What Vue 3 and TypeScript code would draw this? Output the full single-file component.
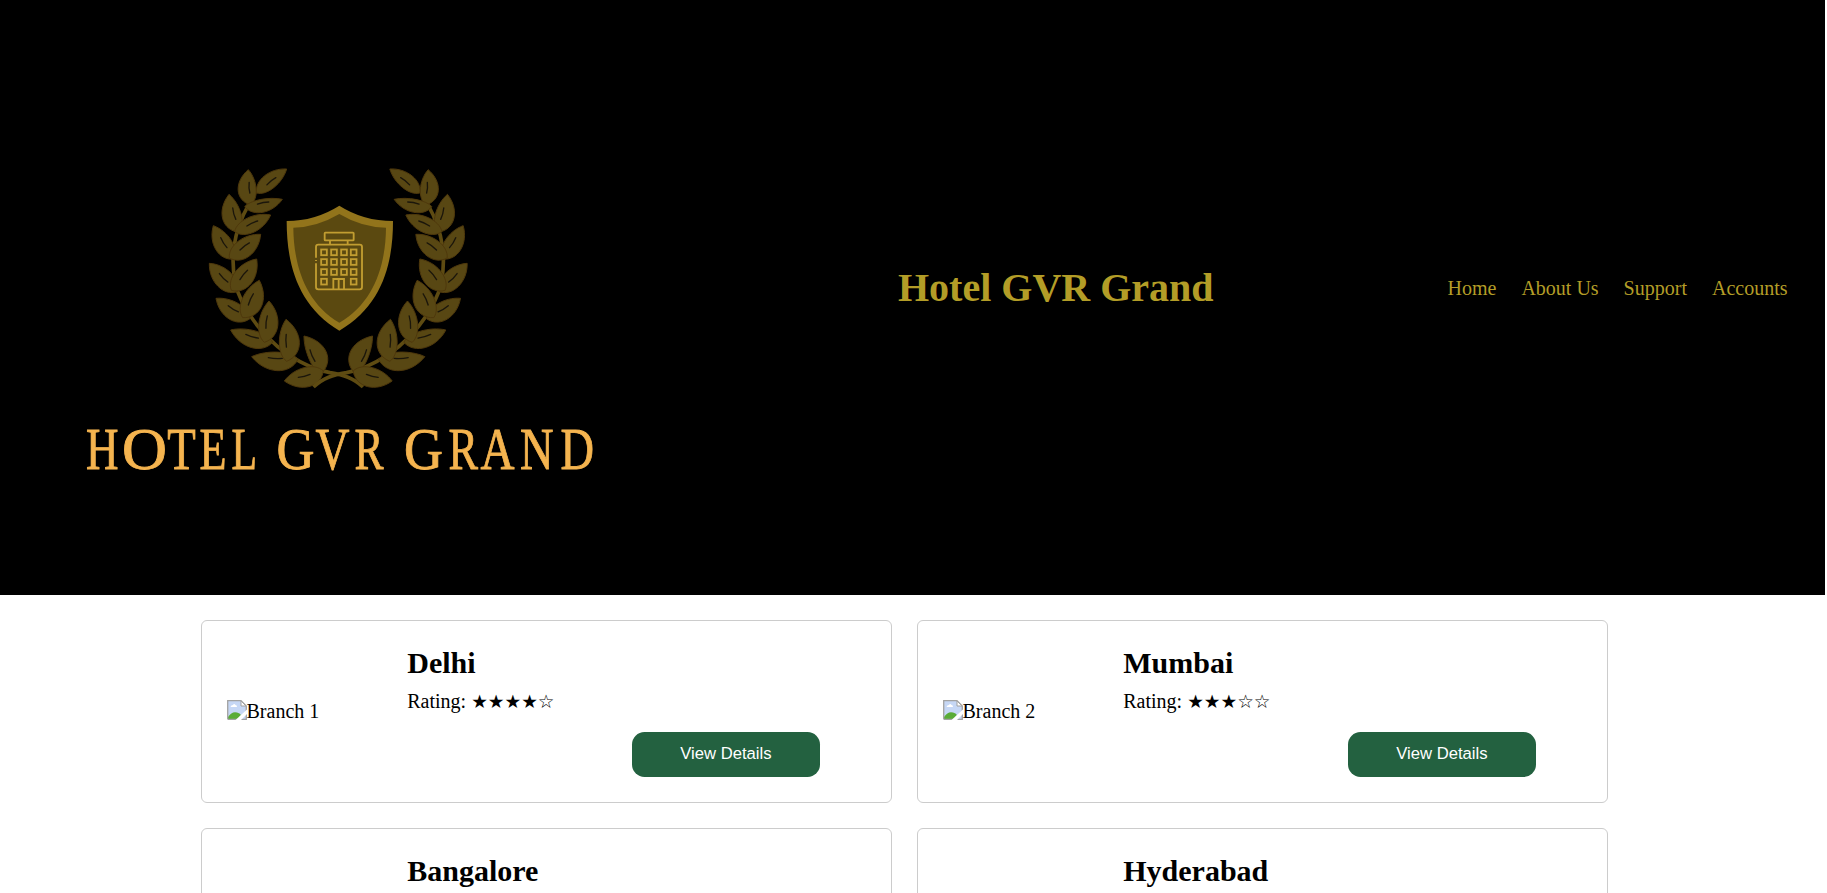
<script setup lang="ts">
interface Branch {
  id: number
  city: string
  rating: number
}

const branches: Branch[] = [
  { id: 1, city: 'Delhi', rating: 4 },
  { id: 2, city: 'Mumbai', rating: 3 },
  { id: 3, city: 'Bangalore', rating: 4 },
  { id: 4, city: 'Hyderabad', rating: 4 },
]

const links: string[] = ['Home', 'About Us', 'Support', 'Accounts']

const stars = (n: number): string => '★'.repeat(n) + '☆'.repeat(5 - n)

// Each wordmark letter: glyph, left edge, width
const wordmark: [string, number, number][] = [
  ['H', 86, 32.5], ['O', 122, 45], ['T', 167.2, 28.5], ['E', 199.5, 27], ['L', 231.5, 25.5],
  ['G', 276.5, 38], ['V', 315.5, 34], ['R', 354.5, 29],
  ['G', 404, 39], ['R', 448.5, 29.5], ['A', 480.5, 34], ['N', 520, 33.5], ['D', 560.5, 33.5],
]

// Wreath leaves: base x/y, tip x/y, bulge to the left, bulge to the right
const leafData: number[][] = [
  [170, 114, 260, 42, 34, 26],
  [152, 150, 145, 44, 46, 26],
  [134, 155, 247, 133, 16, 36],
  [118, 232, 87, 118, 50, 26],
  [104, 230, 212, 180, 28, 34],
  [102, 312, 40, 212, 42, 30],
  [88, 309, 182, 238, 32, 42],
  [112, 410, 28, 325, 40, 34],
  [94, 406, 170, 312, 34, 44],
  [150, 491, 48, 430, 44, 28],
  [128, 488, 178, 376, 32, 50],
  [218, 562, 92, 525, 44, 24],
  [193, 562, 207, 438, 30, 46],
  [294, 613, 155, 605, 50, 24],
  [260, 619, 258, 493, 28, 52],
  [362, 658, 312, 543, 18, 56],
  [370, 648, 253, 678, 46, 32],
]

const leaves = leafData.map(([bx, by, tx, ty, l, r]) => {
  const dx = tx - bx
  const dy = ty - by
  const len = Math.hypot(dx, dy)
  const nx = dy / len
  const ny = -dx / len
  const at = (t: number, off: number): string =>
    `${(bx + dx * t + nx * off).toFixed(1)} ${(by + dy * t + ny * off).toFixed(1)}`
  return {
    shape: `M${bx} ${by}C${at(0.16, l)} ${at(0.68, l)} ${tx} ${ty}C${at(0.68, -r)} ${at(0.16, -r)} ${bx} ${by}Z`,
    vein: `M${at(0.34, 0)}Q${at(0.5, 3)} ${at(0.64, 0)}`,
  }
})

const windows: [number, number][] = []
for (const y of [172, 201, 231, 260]) {
  for (const x of [147, 177, 207, 236]) {
    if (y !== 260 || x === 147 || x === 236) windows.push([x, y])
  }
}
</script>

<template>
  <div class="page">
    <header class="header">
      <svg class="logo" width="680" height="595" viewBox="0 0 680 595">
        <defs>
          <g id="branch">
            <path class="stem" d="M165 112L130 180C98 250 94 320 105 380C122 465 205 570 300 620C340 641 365 648 390 653C430 660 460 668 489 696" />
            <g v-for="(leaf, i) in leaves" :key="i">
              <path class="leaf" :d="leaf.shape" />
              <path class="vein" :d="leaf.vein" />
            </g>
          </g>
        </defs>
        <g transform="translate(200 155) scale(.33333)">
          <use href="#branch" />
          <use href="#branch" transform="translate(829.5 0) scale(-1 1)" />
        </g>
        <g transform="translate(275 195) scale(.33333)">
          <path class="shield" d="M193 32Q265 78 354 78C354 200 325 330 193 407C64 330 35 200 35 78Q120 78 193 32Z" />
          <path class="field" d="M193 57Q260 97 333 98C332 205 300 322 193 383C88 322 56 205 55 98Q125 97 193 57Z" />
          <g class="building">
            <rect x="149" y="113" width="87" height="23" rx="2" />
            <path d="M165 137V149M218 137V149" />
            <path d="M123 188V156Q123 149 130 149H254Q261 149 261 156V276Q261 283 254 283H130Q123 283 123 276V205M123 195V198" />
            <rect v-for="([x, y], i) in windows" :key="i" :x="x - 8.5" :y="y - 8.5" width="17" height="17" />
            <path d="M175 283V252H207V283M191 252V283" />
          </g>
        </g>
        <g class="wordmark">
          <text
            v-for="([ch, x, w], i) in wordmark"
            :key="i"
            :x="x"
            y="469"
            :textLength="w"
            lengthAdjust="spacingAndGlyphs"
          >{{ ch }}</text>
        </g>
      </svg>
      <h1 class="title">Hotel GVR Grand</h1>
      <nav class="nav">
        <a v-for="link in links" :key="link" class="link">{{ link }}</a>
      </nav>
    </header>
    <main class="grid">
      <article v-for="b in branches" :key="b.id" class="card">
        <div class="photo">
          <svg class="broken" width="20" height="20" viewBox="0 0 20 20">
            <path fill="#c6d7f5" d="M1 1H14L19 6V19H1Z" />
            <path fill="#fff" d="M3.5 7Q4 5 6 5Q7 3 8.500 5Q10 5 10 7Z" />
            <path fill="#5aac37" d="M1 19V17Q5 11 10 12.500Q13 13 14 15L11 19Z" />
            <path fill="none" stroke="#a2a2a2" stroke-width="1.300" d="M.7 19.300V.7H14L19.300 6V19.300H.7" />
            <path fill="#fff" stroke="#a2a2a2" d="M14 1V6H19Z" />
            <path fill="#fff" d="M20 9.500V14L14 20H8.500Z" />
          </svg>
          <span class="alt">Branch {{ b.id }}</span>
        </div>
        <div class="info">
          <h2 class="city">{{ b.city }}</h2>
          <p class="rating">Rating: <span class="stars">{{ stars(b.rating) }}</span></p>
          <button class="details">View Details</button>
        </div>
      </article>
    </main>
  </div>
</template>

<style>
body {
  margin: 0;
  overflow: hidden;
  background: #fff;
}
</style>

<style scoped>
.page {
  box-sizing: border-box;
  height: 893px;
  overflow: hidden;
  padding-right: 2px;
  font: 20px/23px "Liberation Serif", "Times New Roman", serif;
  color: #000;
}
.header {
  display: flex;
  align-items: center;
  height: 595px;
  padding: 0 37.5px 20px 0;
  box-sizing: border-box;
  background: #000;
  color: #b39d27;
}
.logo {
  flex: none;
  margin-bottom: -20px;
}
.stem {
  fill: none;
  stroke: #5e4b12;
  stroke-width: 11;
}
.leaf {
  fill: #584713;
  stroke: #4e380c;
  stroke-width: 3;
}
.vein {
  fill: none;
  stroke: #1b160b;
  stroke-width: 4;
  stroke-linecap: round;
}
.shield {
  fill: #92741b;
}
.field {
  fill: #5b4910;
}
.building {
  fill: none;
  stroke: #c19d31;
  stroke-width: 5.500;
}
.wordmark {
  fill: #f5b44f;
  stroke: #f5b44f;
  stroke-width: 0.900;
  font-size: 59.500px;
}
.title {
  margin: 0 0 0 218px;
  font-size: 40px;
  line-height: 46px;
}
.nav {
  display: flex;
  gap: 25px;
  margin-left: auto;
  padding-top: 1px;
}
.grid {
  display: grid;
  grid-template-columns: 691px 691px;
  gap: 25px;
  padding: 25px 0 0 201.250px;
}
.card {
  box-sizing: border-box;
  display: flex;
  align-items: center;
  height: 183px;
  padding: 25px;
  border: 1px solid #ccc;
  border-radius: 6px;
}
.photo {
  display: flex;
  align-items: center;
  width: 155px;
  height: 23px;
  margin-right: 25px;
}
.broken {
  flex: none;
  margin-top: -3px;
}
.alt {
  margin-left: -0.750px;
}
.info {
  flex: 1;
  height: 131px;
}
.city {
  margin: 0;
  font-size: 30px;
  line-height: 34px;
}
.rating {
  height: 23px;
  margin: 10px 0 0;
}
.stars {
  font-family: "DejaVu Sans", sans-serif;
  font-size: 18.600px;
  line-height: 1;
}
.details {
  display: block;
  width: 187.250px;
  height: 45px;
  margin: 19px 0 0 225px;
  padding: 0 0 2px;
  border: 0;
  border-radius: 12.500px;
  background: #236140;
  color: #fff;
  font: 16.667px "Liberation Sans", Arial, sans-serif;
}
</style>
